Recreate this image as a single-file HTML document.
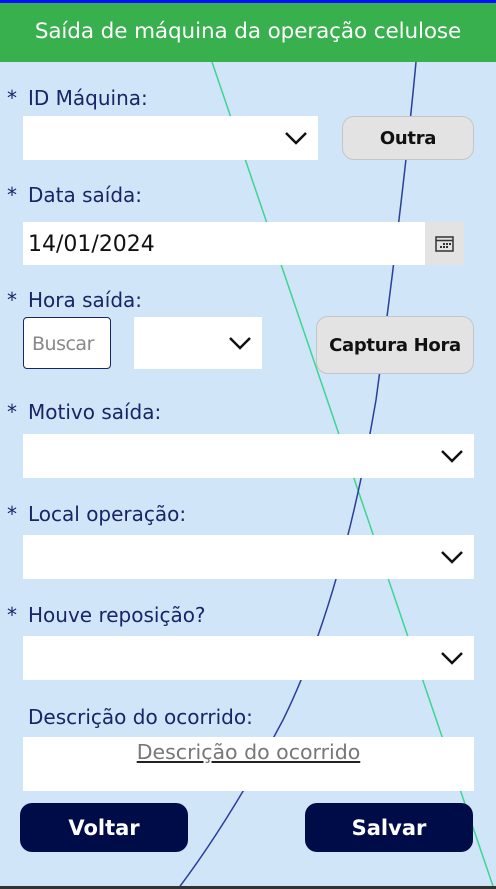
<!DOCTYPE html>
<html><head><meta charset="utf-8"><style>
*{margin:0;padding:0;box-sizing:border-box}
body{width:496px;height:889px;overflow:hidden;position:relative;background:#d0e5f8;font-family:"DejaVu Sans","Liberation Sans",sans-serif;color:#1a2466}
.a{position:absolute}
.top{left:0;top:0;width:496px;height:3px;background:#0010ff}
.hdr{left:0;top:3px;width:496px;height:59px;background:#37b04d;color:#fff;font-size:21.5px;text-align:center;line-height:58px;letter-spacing:-0.1px}
.lbl{font-size:20px;color:#1a2466;letter-spacing:0px}
.lbl b{font-weight:normal;display:inline-block;width:21px}
.box{background:#fff}
.chev{position:absolute;right:10px;top:50%;margin-top:-7px}
.btn{background:#e3e3e3;border:1.5px solid #c5c5c5;border-radius:12px;color:#111;font-weight:bold;font-size:18px;text-align:center;letter-spacing:-0.3px}
.dk{background:#000c48;border-radius:12px;color:#fff;font-weight:bold;font-size:21px;text-align:center;line-height:51px}
</style></head><body>
<svg class="a" style="left:0;top:0" width="496" height="889">
<line x1="212" y1="62" x2="494" y2="889" stroke="#3dd592" stroke-width="1.5"/>
<path d="M416 62 Q403 200 376 400 Q342 600 283 720 Q230 820 178 889" stroke="#2a3f9a" stroke-width="1.5" fill="none"/>
</svg>
<div class="a top"></div>
<div class="a hdr">Saída de máquina da operação celulose</div>

<div class="a lbl" style="left:7px;top:86px"><b>*</b>ID Máquina:</div>
<div class="a box" style="left:23px;top:116px;width:295px;height:44px"><svg class="chev" width="24" height="14"><path d="M2 2l10 10 10-10" stroke="#111" stroke-width="2.5" fill="none"/></svg></div>
<div class="a btn" style="left:342px;top:116px;width:132px;height:44px;line-height:43px">Outra</div>

<div class="a lbl" style="left:7px;top:183px"><b>*</b>Data saída:</div>
<div class="a box" style="left:23px;top:222px;width:402px;height:43px;font-size:22px;color:#111;padding-left:5px;line-height:45px">14/01/2024</div>
<div class="a" style="left:425px;top:222px;width:39px;height:43px;background:#e3e3e3"><svg style="position:absolute;left:10px;top:14px" width="19" height="16"><rect x="1" y="1" width="17" height="14" fill="none" stroke="#333" stroke-width="1.5"/><line x1="1" y1="4.5" x2="18" y2="4.5" stroke="#333" stroke-width="1.5"/><g fill="#333"><rect x="8" y="7" width="2" height="2"/><rect x="11" y="7" width="2" height="2"/><rect x="14" y="7" width="2" height="2"/><rect x="5" y="10" width="2" height="2"/><rect x="8" y="10" width="2" height="2"/><rect x="11" y="10" width="2" height="2"/></g></svg></div>

<div class="a lbl" style="left:7px;top:288px"><b>*</b>Hora saída:</div>
<div class="a box" style="left:23px;top:317px;width:88px;height:52px;border:1.5px solid #1a2466;border-radius:4px;color:#888;font-size:19px;line-height:52px;padding-left:8px;letter-spacing:-0.5px">Buscar</div>
<div class="a box" style="left:134px;top:317px;width:128px;height:52px"><svg class="chev" width="24" height="14"><path d="M2 2l10 10 10-10" stroke="#111" stroke-width="2.5" fill="none"/></svg></div>
<div class="a btn" style="left:316px;top:316px;width:158px;height:58px;line-height:58px">Captura Hora</div>

<div class="a lbl" style="left:7px;top:400px"><b>*</b>Motivo saída:</div>
<div class="a box" style="left:23px;top:434px;width:451px;height:44px"><svg class="chev" width="24" height="14"><path d="M2 2l10 10 10-10" stroke="#111" stroke-width="2.5" fill="none"/></svg></div>

<div class="a lbl" style="left:7px;top:502px"><b>*</b>Local operação:</div>
<div class="a box" style="left:23px;top:535px;width:451px;height:44px"><svg class="chev" width="24" height="14"><path d="M2 2l10 10 10-10" stroke="#111" stroke-width="2.5" fill="none"/></svg></div>

<div class="a lbl" style="left:7px;top:603px"><b>*</b>Houve reposição?</div>
<div class="a box" style="left:23px;top:636px;width:451px;height:44px"><svg class="chev" width="24" height="14"><path d="M2 2l10 10 10-10" stroke="#111" stroke-width="2.5" fill="none"/></svg></div>

<div class="a lbl" style="left:28px;top:705px">Descrição do ocorrido:</div>
<div class="a box" style="left:23px;top:737px;width:451px;height:54px;text-align:center;font-size:20.5px;color:#777;padding-top:3px"><span style="text-decoration:underline;text-decoration-color:#222">Descrição do ocorrido</span></div>

<div class="a dk" style="left:20px;top:803px;width:168px;height:49px">Voltar</div>
<div class="a dk" style="left:305px;top:803px;width:168px;height:49px">Salvar</div>
<div class="a" style="left:0;top:886px;width:496px;height:3px;background:#333"></div>
</body></html>
